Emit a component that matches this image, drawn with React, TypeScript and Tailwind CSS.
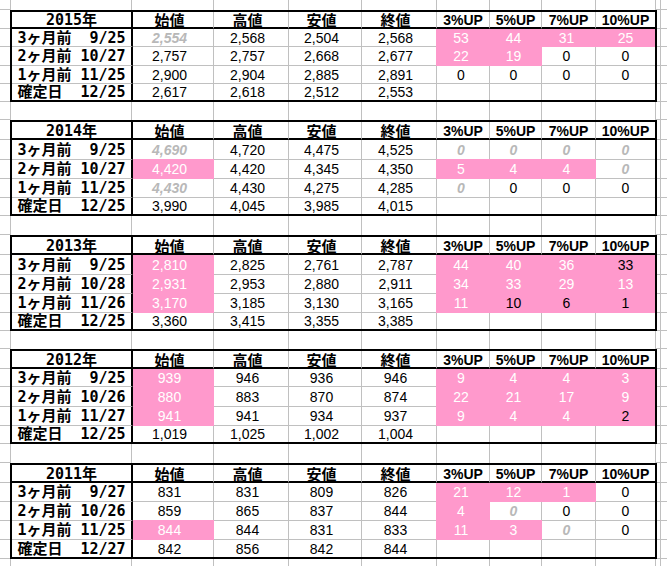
type Table = { year: string; h: number[]; rows: string[][] };

// "!" = pink fill with white text, "#" = pink fill with black text, "~" = grey bold italic
const tables: Table[] = [
  {
    year: "2015年",
    h: [19, 18, 19, 18, 18],
    rows: [
      ["3ヶ月前  9/25", "~2,554", "2,568", "2,504", "2,568", "!53", "!44", "!31", "!25"],
      ["2ヶ月前 10/27", "2,757", "2,757", "2,668", "2,677", "!22", "!19", "0", "0"],
      ["1ヶ月前 11/25", "2,900", "2,904", "2,885", "2,891", "0", "0", "0", "0"],
      ["確定日  12/25", "2,617", "2,618", "2,512", "2,553", "", "", "", ""],
    ],
  },
  {
    year: "2014年",
    h: [20, 20, 19, 19, 18],
    rows: [
      ["3ヶ月前  9/25", "~4,690", "4,720", "4,475", "4,525", "~0", "~0", "~0", "~0"],
      ["2ヶ月前 10/27", "!4,420", "4,420", "4,345", "4,350", "!5", "!4", "!4", "~0"],
      ["1ヶ月前 11/25", "~4,430", "4,430", "4,275", "4,285", "~0", "0", "0", "0"],
      ["確定日  12/25", "3,990", "4,045", "3,985", "4,015", "", "", "", ""],
    ],
  },
  {
    year: "2013年",
    h: [20, 20, 19, 19, 18],
    rows: [
      ["3ヶ月前  9/25", "!2,810", "2,825", "2,761", "2,787", "!44", "!40", "!36", "#33"],
      ["2ヶ月前 10/28", "!2,931", "2,953", "2,880", "2,911", "!34", "!33", "!29", "!13"],
      ["1ヶ月前 11/26", "!3,170", "3,185", "3,130", "3,165", "!11", "#10", "#6", "#1"],
      ["確定日  12/25", "3,360", "3,415", "3,355", "3,385", "", "", "", ""],
    ],
  },
  {
    year: "2012年",
    h: [20, 18, 20, 19, 18],
    rows: [
      ["3ヶ月前  9/25", "!939", "946", "936", "946", "!9", "!4", "!4", "!3"],
      ["2ヶ月前 10/26", "!880", "883", "870", "874", "!22", "!21", "!17", "!9"],
      ["1ヶ月前 11/27", "!941", "941", "934", "937", "!9", "!4", "!4", "#2"],
      ["確定日  12/25", "1,019", "1,025", "1,002", "1,004", "", "", "", ""],
    ],
  },
  {
    year: "2011年",
    h: [20, 19, 19, 19, 19],
    rows: [
      ["3ヶ月前  9/27", "831", "831", "809", "826", "!21", "!12", "!1", "0"],
      ["2ヶ月前 10/26", "859", "865", "837", "844", "!4", "~0", "0", "0"],
      ["1ヶ月前 11/25", "!844", "844", "831", "833", "!11", "!3", "~0", "0"],
      ["確定日  12/27", "842", "856", "842", "844", "", "", "", ""],
    ],
  },
];

const headers = ["始値", "高値", "安値", "終値", "3%UP", "5%UP", "7%UP", "10%UP"];

const hCls: Record<number, string> = {
  8: "h-[8px]",
  10: "h-[10px]",
  16: "h-[16px]",
  17: "h-[17px]",
  18: "h-[18px]",
  19: "h-[19px]",
  20: "h-[20px]",
};

// widths inside the bordered table (B..J)
const innerW = ["w-[121px]", "w-[81px]", "w-[75px]", "w-[73px]", "w-[75px]", "w-[53px]", "w-[52px]", "w-[54px]", "w-[59px]"];
// widths of a plain sheet row (A..L)
const blankW = ["w-[11px]", "w-[121px]", "w-[82px]", "w-[75px]", "w-[73px]", "w-[75px]", "w-[53px]", "w-[52px]", "w-[54px]", "w-[60px]", "w-[5px]", "w-[20px]"];

const fLabel = "font-['DejaVu_Sans_Mono','Noto_Sans_CJK_JP',monospace] text-[15px] font-bold leading-[16px]";
const fKanji = "font-['Noto_Sans_CJK_JP',sans-serif] text-[15px] font-bold leading-[16px]";
const fUp = "font-['Liberation_Sans',sans-serif] text-[14px] font-bold leading-[16px]";
const fNum = "font-['Liberation_Sans','Noto_Sans_CJK_JP',sans-serif] text-[14px] leading-[16px]";

const base = "flex shrink-0 items-center justify-center whitespace-pre";

function BlankRow({ h }: { h: number }) {
  return (
    <div className={`flex ${hCls[h]}`}>
      {blankW.map((w, i) => {
        const outside = i === 0 || i >= 10;
        return (
          <div
            key={i}
            className={`${w} shrink-0 ${i < 11 ? "border-r border-r-[#c0c0c0]" : ""} ${outside ? "border-b border-b-[#c0c0c0]" : ""}`}
          />
        );
      })}
    </div>
  );
}

function HeadRow({ year, h }: { year: string; h: number }) {
  return (
    <div className={`flex ${hCls[h]}`}>
      <div className={`${base} ${innerW[0]} ${fLabel} border-r-2 border-b-2 border-r-black border-b-black pt-px`}>
        {year}
      </div>
      {headers.map((t, i) => {
        const col = i + 1;
        const font = col <= 4 ? `${fKanji} pr-[7px]` : fUp;
        const right = col === 8 ? "" : "border-r border-r-[#c0c0c0]";
        return (
          <div key={t} className={`${base} ${innerW[col]} ${font} ${right} border-b-2 border-b-black pt-px`}>
            {t}
          </div>
        );
      })}
    </div>
  );
}

function DataCell({ v, col, row }: { v: string; col: number; row: number }) {
  const pink = v.startsWith("!") || v.startsWith("#");
  const gray = v.startsWith("~");
  const text = pink || gray ? v.slice(1) : v;
  const last = row === 4;

  const right = col === 8 ? "" : pink ? "border-r border-r-[#ff99cc]" : "border-r border-r-[#c0c0c0]";
  const bottom = last ? "" : pink ? "border-b border-b-[#ff99cc]" : "border-b border-b-[#c0c0c0]";

  let shadow = "";
  if (pink) {
    if (row >= 2 && col > 1) shadow = "shadow-[-1px_0_0_#ff99cc,0_-1px_0_#ff99cc,-1px_-1px_0_#ff99cc]";
    else if (col > 1) shadow = "shadow-[-1px_0_0_#ff99cc]";
    else if (row >= 2) shadow = "shadow-[0_-1px_0_#ff99cc]";
  }

  const fill = pink ? "bg-[#ff99cc]" : "";
  const color = v.startsWith("!") ? "text-white" : gray ? "text-[#b8b8b8] font-bold italic" : "text-black";
  const pad = col <= 4 ? "pr-[7px]" : col === 8 ? "" : "pr-1";

  return (
    <div className={`${base} ${innerW[col]} ${fNum} ${fill} ${color} ${right} ${bottom} ${shadow} ${pad}`}>
      {text}
    </div>
  );
}

function TableBlock({ t }: { t: Table }) {
  const inner = t.h.map((h, i) => (i === 0 || i === 4 ? h - 2 : h));
  return (
    <div className="flex">
      <div className="flex w-[10px] shrink-0 flex-col">
        {t.h.map((h, i) => (
          <div key={i} className={`${hCls[h]} border-b border-b-[#c0c0c0]`} />
        ))}
      </div>
      <div className="flex shrink-0 flex-col border-2 border-black">
        <HeadRow year={t.year} h={inner[0]} />
        {t.rows.map((r, ri) => (
          <div key={ri} className={`flex ${hCls[inner[ri + 1]]}`}>
            <div
              className={`${base} ${innerW[0]} ${fLabel} border-r-2 border-r-black ${
                ri === 3 ? "" : "border-b border-b-[#c0c0c0]"
              }`}
            >
              {r[0]}
            </div>
            {r.slice(1).map((v, ci) => (
              <DataCell key={ci} v={v} col={ci + 1} row={ri + 1} />
            ))}
          </div>
        ))}
      </div>
      <div className="flex shrink-0 flex-col">
        {t.h.map((h, i) => (
          <div key={i} className={`flex ${hCls[h]}`}>
            <div className="w-[4px] border-r border-b border-r-[#c0c0c0] border-b-[#c0c0c0]" />
            <div className="w-[20px] border-b border-b-[#c0c0c0]" />
          </div>
        ))}
      </div>
    </div>
  );
}

const gaps = [18, 19, 18, 19, 8];

export default function App() {
  return (
    <div className="h-[566px] w-[667px] overflow-hidden bg-white">
      <BlankRow h={10} />
      {tables.map((t, i) => (
        <div key={t.year}>
          <TableBlock t={t} />
          <BlankRow h={gaps[i]} />
        </div>
      ))}
    </div>
  );
}
